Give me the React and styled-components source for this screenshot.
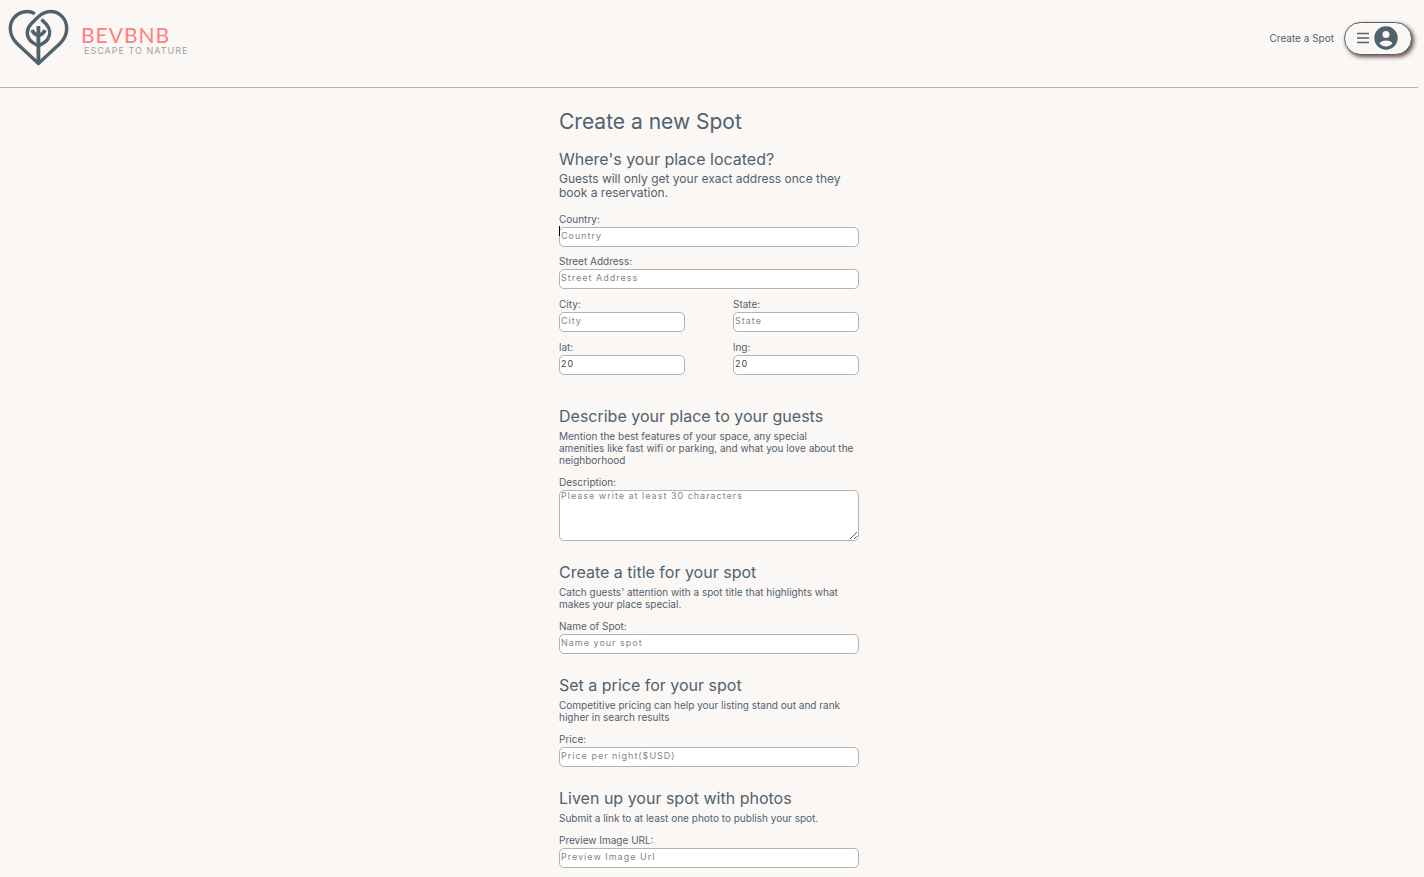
import React from "react";
import styled, { createGlobalStyle } from "styled-components";

const slate = "#51626f";

const GlobalStyle = createGlobalStyle`
  *, *::before, *::after { box-sizing: border-box; }
  body {
    margin: 0;
    background: #fbf7f4;
    color: ${slate};
    font-family: Inter, "Liberation Sans", sans-serif;
  }
  h1, h2, p { margin: 0; }
`;

const Page = styled.div`
  padding-right: 6px;
`;

const Header = styled.header`
  display: flex;
  justify-content: space-between;
  height: 88px;
  padding: 8px 6px 0 8px;
  border-bottom: 1px solid #adb5b8;
`;

const Brand = styled.a`
  display: flex;
  align-items: flex-start;
  gap: 12px;
  height: 60px;
  text-decoration: none;
`;

const Wordmark = styled.span`
  display: flex;
  flex-direction: column;
  padding-top: 17px;
`;

const BrandName = styled.span`
  font-family: Lato, sans-serif;
  font-size: 21px;
  line-height: 20px;
  letter-spacing: 1px;
  color: #ff8080;
`;

const Tagline = styled.span`
  padding: 1px 0 0 3px;
  font-size: 9px;
  line-height: 10px;
  letter-spacing: 1px;
  color: #9aa3a8;
`;

const Nav = styled.nav`
  display: flex;
  align-items: center;
  gap: 10px;
  height: 60px;
`;

const NavLink = styled.a`
  font-size: 10px;
  line-height: 12px;
  color: ${slate};
  text-decoration: none;
`;

const MenuButton = styled.button`
  display: flex;
  align-items: center;
  justify-content: center;
  gap: 5px;
  width: 68px;
  height: 33px;
  padding: 0 2px 0 0;
  border: 1px solid #4f626d;
  border-radius: 17px;
  background: #fbf7f4;
  box-shadow: 2px 2px 4px #6b4a4a;
  color: #4f626d;
`;

const Form = styled.form`
  display: flex;
  flex-direction: column;
  gap: 21px;
  width: 300px;
  margin: 0 auto;
  padding: 20px 0 9px;
`;

const Title = styled.h1`
  font-size: 21px;
  font-weight: 400;
  line-height: 28px;
  margin-bottom: -8px;
`;

const Section = styled.section`
  padding-bottom: ${(p) => (p.$spaced ? "10px" : "0")};
`;

const SectionTitle = styled.h2`
  font-size: 16px;
  font-weight: 400;
  line-height: 20px;
`;

const Hint = styled.p`
  margin: ${(p) => (p.$large ? "3px 0 13px" : "4px 0 10px")};
  font-size: ${(p) => (p.$large ? "12px" : "10px")};
  line-height: ${(p) => (p.$large ? "14px" : "12px")};
`;

const Stack = styled.div`
  display: flex;
  flex-direction: column;
  gap: 8px;
`;

const Pairs = styled.div`
  display: grid;
  grid-template-columns: 1fr 1fr;
  gap: 9px 48px;
  margin-top: 9px;
`;

const FieldBox = styled.div`
  position: relative;
  display: flex;
  flex-direction: column;
  gap: 2px;
`;

const Label = styled.label`
  font-size: 10px;
  line-height: 12px;
`;

const TextInput = styled.input`
  width: 100%;
  height: 20px;
  padding: 0 1px 3px;
  border: 1px solid #adb5b8;
  border-radius: 5px;
  outline: none;
  background: #fff;
  color: #444;
  font-family: inherit;
  font-size: 9px;
  letter-spacing: 1px;
  &::placeholder { color: #858585; }
`;

const TextArea = styled(TextInput)`
  display: block;
  height: 51px;
  padding: 0 1px;
  line-height: 10px;
  resize: both;
`;

const Caret = styled.span`
  position: absolute;
  left: 0;
  top: 13px;
  width: 1px;
  height: 10px;
  background: #000;
`;

function Field({ id, label, caret, multiline, ...rest }) {
  return (
    <FieldBox>
      <Label htmlFor={id}>{label}</Label>
      {multiline ? <TextArea as="textarea" id={id} {...rest} /> : <TextInput id={id} {...rest} />}
      {caret && <Caret aria-hidden="true" />}
    </FieldBox>
  );
}

function HeartLeaf() {
  return (
    <svg width="61" height="60" viewBox="8 8 61 60" fill="none" stroke="#4f626d" strokeWidth="3.4" aria-hidden="true">
      <path d="M35 13.700C31 11.500 27 11 23.500 12C15 14 10 21 10.300 29C10.500 35 13 39.500 17 43.500L38.400 63.500L60 43.500C64 39.500 66.700 35 66.700 28.500C66.700 19 59.500 11.500 50.500 11.500C45 11.500 41 14 37.500 17.500L31.500 23.500C26.500 28.500 26 35 29.500 39.500C31.500 42.500 35 44 38.400 46C42 44 45.500 42.500 47.500 39.500C50.500 35 50.500 29 46.500 24.500L41.500 19.500" />
      <path d="M38.400 63V26M32 30Q34 34.500 38.400 35.500Q43 34.500 45 30" strokeWidth="3.800" />
    </svg>
  );
}

export default function App() {
  return (
    <Page>
      <GlobalStyle />
      <Header>
        <Brand href="#home">
          <HeartLeaf />
          <Wordmark>
            <BrandName>BEVBNB</BrandName>
            <Tagline>ESCAPE TO NATURE</Tagline>
          </Wordmark>
        </Brand>
        <Nav>
          <NavLink href="#new">Create a Spot</NavLink>
          <MenuButton type="button" aria-label="Account menu">
            <svg width="12" height="12" viewBox="0 0 12 12" stroke="currentColor" strokeWidth="1.7" aria-hidden="true">
              <path d="M0 1.500H12M0 6H12M0 10.500H12" />
            </svg>
            <svg width="24" height="24" viewBox="0 0 24 24" aria-hidden="true">
              <circle cx="12" cy="12" r="11.700" fill="currentColor" />
              <circle cx="12" cy="8.500" r="3.500" fill="#fbf7f4" />
              <path d="M5.500 17.500C7 13.500 17 13.500 18.500 17.500C15 21.500 9 21.500 5.500 17.500Z" fill="#fbf7f4" />
            </svg>
          </MenuButton>
        </Nav>
      </Header>
      <Form>
        <Title>Create a new Spot</Title>
        <Section $spaced>
          <SectionTitle>Where's your place located?</SectionTitle>
          <Hint $large>Guests will only get your exact address once they book a reservation.</Hint>
          <Stack>
            <Field id="country" label="Country:" placeholder="Country" caret />
            <Field id="street" label="Street Address:" placeholder="Street Address" />
          </Stack>
          <Pairs>
            <Field id="city" label="City:" placeholder="City" />
            <Field id="state" label="State:" placeholder="State" />
            <Field id="lat" label="lat:" defaultValue="20" />
            <Field id="lng" label="lng:" defaultValue="20" />
          </Pairs>
        </Section>
        <Section>
          <SectionTitle>Describe your place to your guests</SectionTitle>
          <Hint>
            Mention the best features of your space, any special
            <br />
            amenities like fast wifi or parking, and what you love about the neighborhood
          </Hint>
          <Field id="description" label="Description:" placeholder="Please write at least 30 characters" multiline />
        </Section>
        <Section>
          <SectionTitle>Create a title for your spot</SectionTitle>
          <Hint>Catch guests' attention with a spot title that highlights what makes your place special.</Hint>
          <Field id="name" label="Name of Spot:" placeholder="Name your spot" />
        </Section>
        <Section>
          <SectionTitle>Set a price for your spot</SectionTitle>
          <Hint>Competitive pricing can help your listing stand out and rank higher in search results</Hint>
          <Field id="price" label="Price:" placeholder="Price per night($USD)" />
        </Section>
        <Section>
          <SectionTitle>Liven up your spot with photos</SectionTitle>
          <Hint>Submit a link to at least one photo to publish your spot.</Hint>
          <Field id="preview" label="Preview Image URL:" placeholder="Preview Image Url" />
        </Section>
      </Form>
    </Page>
  );
}
